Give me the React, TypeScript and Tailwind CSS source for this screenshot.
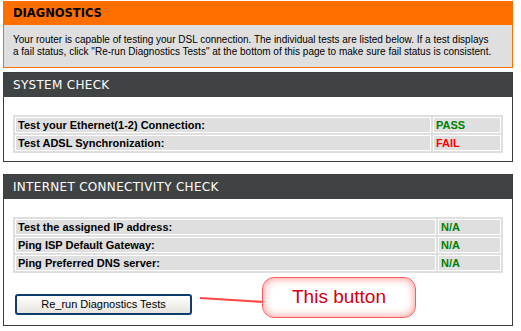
import React from "react";

const checks = [
  { label: "Test your Ethernet(1-2) Connection:", value: "PASS", ok: true },
  { label: "Test ADSL Synchronization:", value: "FAIL", ok: false },
];

const inet = [
  { label: "Test the assigned IP address:", value: "N/A" },
  { label: "Ping ISP Default Gateway:", value: "N/A" },
  { label: "Ping Preferred DNS server:", value: "N/A" },
];

function Section({ title, children }: { title: string; children: React.ReactNode }) {
  return (
    <div className="border border-[#3a3d3d] bg-white">
      <div className="h-[24px] bg-[#404343] flex items-center px-[9px] text-white text-[12px] tracking-[0.3px]">
        {title}
      </div>
      {children}
    </div>
  );
}

export default function App() {
  return (
    <div className="relative w-[521px] h-[331px] bg-white font-['DejaVu_Sans',sans-serif] text-black">
      <div className="pt-[1px] pl-[3px] w-[513px]">
        {/* Diagnostics */}
        <div className="border border-[#ff6f00]">
          <div className="h-[23px] bg-[#ff6f00] flex items-center px-[9px] font-bold text-[11.5px]">
            DIAGNOSTICS
          </div>
          <div className="bg-[#dfdfdf] px-[9px] pt-[9px] pb-[9px] text-[10px] leading-[12px] whitespace-nowrap font-['Liberation_Sans',sans-serif]">
            Your router is capable of testing your DSL connection. The individual tests are listed below. If a test
            displays
            <br />
            a fail status, click "Re-run Diagnostics Tests" at the bottom of this page to make sure fail status is
            consistent.
          </div>
        </div>

        <div className="h-[4px]" />

        <Section title="SYSTEM CHECK">
          <div className="pt-[18px] pb-[8px] px-[9px]">
            <table className="w-full bg-[#dfdfdf] border-separate border-spacing-[2px] text-[11px] font-bold font-['Liberation_Sans',sans-serif]">
              <tbody>
                {checks.map((c) => (
                  <tr key={c.label}>
                    <td className="border border-white h-[16px] px-[2px] leading-[14px]">{c.label}</td>
                    <td
                      className={`border border-white w-[68px] px-[2px] leading-[14px] ${
                        c.ok ? "text-[#008000]" : "text-[#ff0000]"
                      }`}
                    >
                      {c.value}
                    </td>
                  </tr>
                ))}
              </tbody>
            </table>
          </div>
        </Section>

        <div className="h-[12px]" />

        <Section title="INTERNET CONNECTIVITY CHECK">
          <div className="pt-[18px] pb-[10px] px-[9px]">
            <table className="w-full bg-[#dfdfdf] border-separate border-spacing-[2px] text-[11px] font-bold font-['Liberation_Sans',sans-serif]">
              <tbody>
                {inet.map((c) => (
                  <tr key={c.label}>
                    <td className="border border-white h-[16px] px-[2px] leading-[14px]">{c.label}</td>
                    <td className="border border-white w-[63px] px-[2px] leading-[14px] text-[#008000]">{c.value}</td>
                  </tr>
                ))}
              </tbody>
            </table>
            <div className="mt-[18px] pl-[2px]">
              <button className="w-[177px] h-[21px] rounded-[3px] border-2 border-[#0f3c6e] bg-gradient-to-b from-white to-[#e6e4dc] text-[11px] font-['Liberation_Sans',sans-serif]">
                Re_run Diagnostics Tests
              </button>
            </div>
          </div>
        </Section>
      </div>

      {/* annotation */}
      <svg className="absolute left-0 top-0 pointer-events-none" width="521" height="331">
        <line x1="200" y1="298" x2="264" y2="302" stroke="#ff4545" strokeWidth="2" />
      </svg>
      <div className="absolute left-[262px] top-[277px] w-[154px] h-[41px] rounded-[12px] border border-[#ff5a5a] bg-white shadow-[inset_0_0_10px_#ff8a8a] flex items-center justify-center text-[19px] text-[#d00010] font-['Liberation_Sans',sans-serif]">
        This button
      </div>
    </div>
  );
}
